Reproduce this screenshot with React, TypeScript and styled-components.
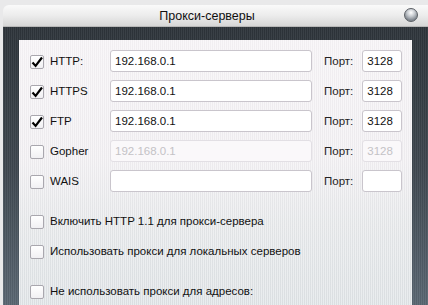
import styled, { createGlobalStyle } from "styled-components";

const GlobalStyle = createGlobalStyle`
    html, body {
        margin: 0;
        padding: 0;
        overflow: hidden;
        background: #e9e9ea;
    }
    body {
        font-family: "Liberation Sans", Arial, sans-serif;
    }
`;

const Page = styled.div`
    width: 428px;
    height: 305px;
    padding: 5px 0 0 3px;
    box-sizing: border-box;
    overflow: hidden;
`;

const Window = styled.div`
    width: 440px;
    height: 300px;
    display: flex;
    flex-direction: column;
`;

const TitleBar = styled.div`
    height: 22px;
    flex: none;
    border-radius: 6px 6px 0 0;
    background: linear-gradient(#fafafa, #ececec 50%, #d6d6d6);
    border-bottom: 1px solid #b8b8b8;
    display: flex;
    align-items: center;
    justify-content: center;
    position: relative;
    padding-right: 12px;
    box-sizing: border-box;
`;

const Title = styled.span`
    font-size: 12.5px;
    color: #101010;
    margin-left: -20px;
`;

const CloseButton = styled.div`
    position: absolute;
    left: 401px;
    top: 3px;
    width: 14px;
    height: 14px;
    border-radius: 50%;
    border: 1px solid #5a5e64;
    box-sizing: border-box;
    background: radial-gradient(circle at 50% 30%, #ffffff 0%, #c9cdd2 35%, #7c838b 75%, #a9b0b6 100%);
`;

const Frame = styled.div`
    flex: 1;
    padding: 13px 0 0 16px;
    background:
        repeating-linear-gradient(90deg, rgba(255, 255, 255, 0.05) 0 1px, rgba(0, 0, 0, 0.05) 1px 2px),
        linear-gradient(#2e353b, #3f4850 50%, #5b6874);
`;

const Panel = styled.div`
    width: 393px;
    height: 270px;
    box-sizing: border-box;
    padding: 10px 11px 0 11px;
    background:
        repeating-linear-gradient(90deg, rgba(255, 255, 255, 0.35) 0 1px, rgba(0, 0, 0, 0.015) 1px 2px),
        linear-gradient(#f6f3f6, #f1eff2 45%, #e6e8ea 68%, #dde2e5);
    display: flex;
    flex-direction: column;
`;

const ProxyRow = styled.div`
    height: 30px;
    display: flex;
    align-items: flex-start;
`;

const CheckBox = styled.div`
    width: 14px;
    height: 14px;
    flex: none;
    margin-top: 5px;
    box-sizing: border-box;
    border: 1px solid #a9a7ae;
    border-radius: 2px;
    background: linear-gradient(#ffffff, #f1f0f3);
    display: flex;
    align-items: center;
    justify-content: center;
`;

const Label = styled.span`
    width: 60px;
    flex: none;
    margin-left: 6px;
    margin-top: 5px;
    font-size: 11.5px;
    color: #111;
`;

const Input = styled.div<{ $width: number; $disabled?: boolean }>`
    width: ${(p) => p.$width}px;
    height: 22px;
    flex: none;
    box-sizing: border-box;
    border: 1px solid ${(p) => (p.$disabled ? "#e2dfe4" : "#c9c5cc")};
    border-radius: 3px;
    background: ${(p) => (p.$disabled ? "#faf8fa" : "#ffffff")};
    font-size: 11.5px;
    color: ${(p) => (p.$disabled ? "#c4c2c6" : "#111")};
    padding: 4px 0 0 4px;
    white-space: nowrap;
    overflow: hidden;
`;

const PortLabel = styled.span`
    margin: 5px 9px 0 12px;
    font-size: 11.5px;
    color: #222;
`;

const Option = styled.div<{ $gap: number }>`
    height: 30px;
    margin-top: ${(p) => p.$gap}px;
    display: flex;
    align-items: flex-start;
`;

const OptionText = styled.span`
    margin: 5px 0 0 6px;
    font-size: 11.5px;
    color: #111;
`;

const Check = () => (
    <svg width="13" height="13" viewBox="0 0 12 12">
        <path d="M1.5 6 L4.6 9.4 L11 1" fill="none" stroke="#000" strokeWidth="2.2" />
    </svg>
);

const proxies = [
    { name: "HTTP:", host: "192.168.0.1", port: "3128", checked: true },
    { name: "HTTPS", host: "192.168.0.1", port: "3128", checked: true },
    { name: "FTP", host: "192.168.0.1", port: "3128", checked: true },
    { name: "Gopher", host: "192.168.0.1", port: "3128", disabled: true },
    { name: "WAIS", host: "", port: "" },
];

const options = [
    { text: "Включить HTTP 1.1 для прокси-сервера", gap: 10 },
    { text: "Использовать прокси для локальных серверов", gap: 0 },
    { text: "Не использовать прокси для адресов:", gap: 10 },
];

const App = () => (
    <Page>
        <GlobalStyle />
        <Window>
            <TitleBar>
                <Title>Прокси-серверы</Title>
                <CloseButton />
            </TitleBar>
            <Frame>
                <Panel>
                    {proxies.map((p) => (
                        <ProxyRow key={p.name}>
                            <CheckBox>{p.checked && <Check />}</CheckBox>
                            <Label>{p.name}</Label>
                            <Input $width={202} $disabled={p.disabled}>
                                {p.host}
                            </Input>
                            <PortLabel>Порт:</PortLabel>
                            <Input $width={40} $disabled={p.disabled}>
                                {p.port}
                            </Input>
                        </ProxyRow>
                    ))}
                    {options.map((o) => (
                        <Option key={o.text} $gap={o.gap}>
                            <CheckBox />
                            <OptionText>{o.text}</OptionText>
                        </Option>
                    ))}
                </Panel>
            </Frame>
        </Window>
    </Page>
);

export default App;
